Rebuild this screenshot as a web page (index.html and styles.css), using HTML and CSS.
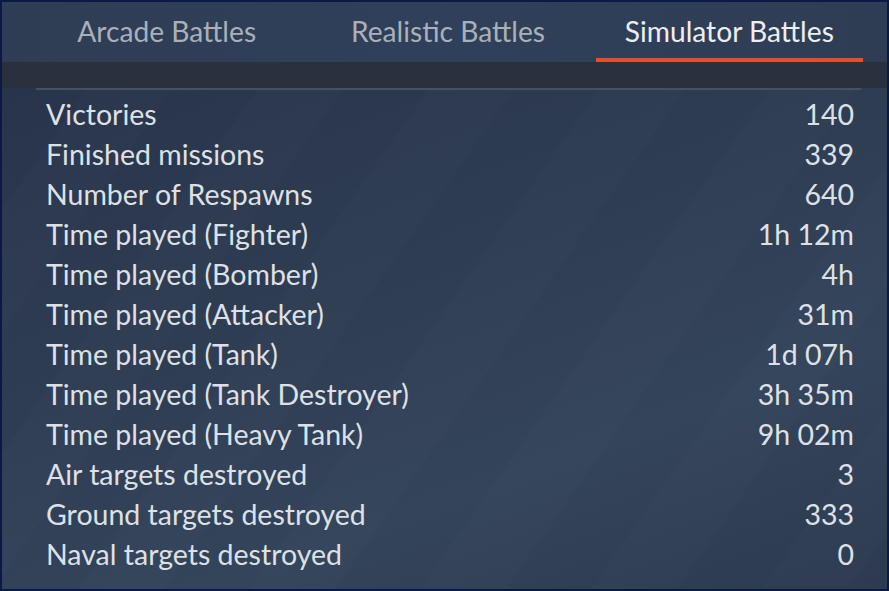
FILE: index.html
```html
<!DOCTYPE html>
<html>
<head>
<meta charset="utf-8">
<link rel="stylesheet" href="styles.css">
</head>
<body>
<div class="frame">
  <div class="tabs">
    <div class="tab">Arcade Battles</div>
    <div class="tab">Realistic Battles</div>
    <div class="tab active">Simulator Battles</div>
  </div>
  <div class="band"></div>
  <div class="content">
    <div class="sep"></div>
    <div class="rows">
      <div class="row"><span>Victories</span><span>140</span></div>
      <div class="row"><span>Finished missions</span><span>339</span></div>
      <div class="row"><span>Number of Respawns</span><span>640</span></div>
      <div class="row"><span>Time played (Fighter)</span><span>1h 12m</span></div>
      <div class="row"><span>Time played (Bomber)</span><span>4h</span></div>
      <div class="row"><span>Time played (Attacker)</span><span>31m</span></div>
      <div class="row"><span>Time played (Tank)</span><span>1d 07h</span></div>
      <div class="row"><span>Time played (Tank Destroyer)</span><span>3h 35m</span></div>
      <div class="row"><span>Time played (Heavy Tank)</span><span>9h 02m</span></div>
      <div class="row"><span>Air targets destroyed</span><span>3</span></div>
      <div class="row"><span>Ground targets destroyed</span><span>333</span></div>
      <div class="row"><span>Naval targets destroyed</span><span>0</span></div>
    </div>
  </div>
</div>
</body>
</html>
```
FILE: styles.css
```css
html, body {
  margin: 0;
  padding: 0;
  background: #0b1945;
}
.frame {
  width: 889px;
  height: 591px;
  box-sizing: border-box;
  border: 2px solid #0b1945;
  display: flex;
  flex-direction: column;
  font-family: Lato, "Open Sans", sans-serif;
  overflow: hidden;
  background: #2d3a4e;
}
.tabs {
  height: 60px;
  flex: none;
  display: grid;
  grid-template-columns: repeat(3, 1fr);
  padding: 0 17px 0 24px;
  background: linear-gradient(90deg, #2f3d54, #30405a 50%, #2f3d54);
}
.tab {
  position: relative;
  display: flex;
  align-items: center;
  justify-content: center;
  padding-bottom: 3px;
  font-size: 28.2px;
  color: #a8b0ba;
}
.tab.active {
  color: #eceef2;
}
.tab.active::after {
  content: "";
  position: absolute;
  left: 7px;
  right: 7px;
  bottom: 0;
  height: 4px;
  background: #e1502b;
}
.band {
  height: 26px;
  flex: none;
  background: #29313f;
}
.content {
  flex: 1;
  background:
    repeating-linear-gradient(125deg, rgba(255,255,255,0.0) 0 70px, rgba(255,255,255,0.012) 70px 140px),
    linear-gradient(160deg, #28344a 0%, #2f3d53 40%, #34445a 70%, #2d3a4f 100%);
}
.sep {
  height: 2px;
  margin: 0 26px 0 34px;
  background: #485160;
}
.rows {
  padding: 4px 33px 0 44px;
}
.row {
  height: 40px;
  display: flex;
  align-items: center;
  justify-content: space-between;
  font-size: 28.5px;
  color: #dde1e7;
}
```
